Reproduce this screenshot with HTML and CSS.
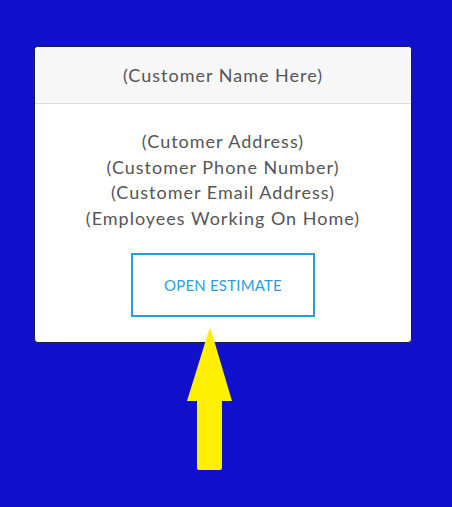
FILE: index.html
```html
<!DOCTYPE html>
<html>
<head>
<meta charset="utf-8">
<link rel="stylesheet" href="styles.css">
</head>
<body>
<div class="card">
  <div class="card-header">(Customer Name Here)</div>
  <div class="card-body">
    <p class="info">(Cutomer Address)<br>(Customer Phone Number)<br>(Customer Email Address)<br>(Employees Working On Home)</p>
    <a class="btn" href="#">OPEN ESTIMATE</a>
  </div>
</div>
<svg class="arrow" width="48" height="144" viewBox="0 0 48 144">
  <path d="M22 2 Q23 0 24 2 L45 73 L35 73 L35 140 Q35 142 33 142 L12 142 Q10 142 10 140 L10 73 L0 73 Z" fill="#ffef00"/>
</svg>
</body>
</html>
```
FILE: styles.css
```css
html, body {
  margin: 0;
  padding: 0;
}
body {
  background: #1111cc;
  width: 452px;
  height: 507px;
  position: relative;
  overflow: hidden;
  font-family: Lato, "Open Sans", sans-serif;
}
.card {
  margin: 46px 0 0 34px;
  width: 376px;
  background: #fff;
  border: 1px solid #1b1b3a;
  border-radius: 4px;
  overflow: hidden;
}
.card-header {
  background: #f7f7f7;
  border-bottom: 1px solid #dcdcdc;
  height: 56px;
  line-height: 56px;
  text-align: center;
  color: #555;
  font-size: 18px;
  letter-spacing: 1px;
}
.card-body {
  padding: 25px 0 25px;
  display: flex;
  flex-direction: column;
  align-items: center;
}
.info {
  margin: 0;
  text-align: center;
  color: #555;
  font-size: 18px;
  line-height: 25.7px;
  letter-spacing: 1px;
}
.btn {
  margin-top: 21px;
  width: 180px;
  height: 60px;
  border: 2px solid #2a9fd6;
  color: #2a9fd6;
  display: flex;
  align-items: center;
  justify-content: center;
  font-size: 15px;
  text-decoration: none;
  letter-spacing: 0.2px;
}
.arrow {
  position: absolute;
  left: 187px;
  top: 328px;
}
```
